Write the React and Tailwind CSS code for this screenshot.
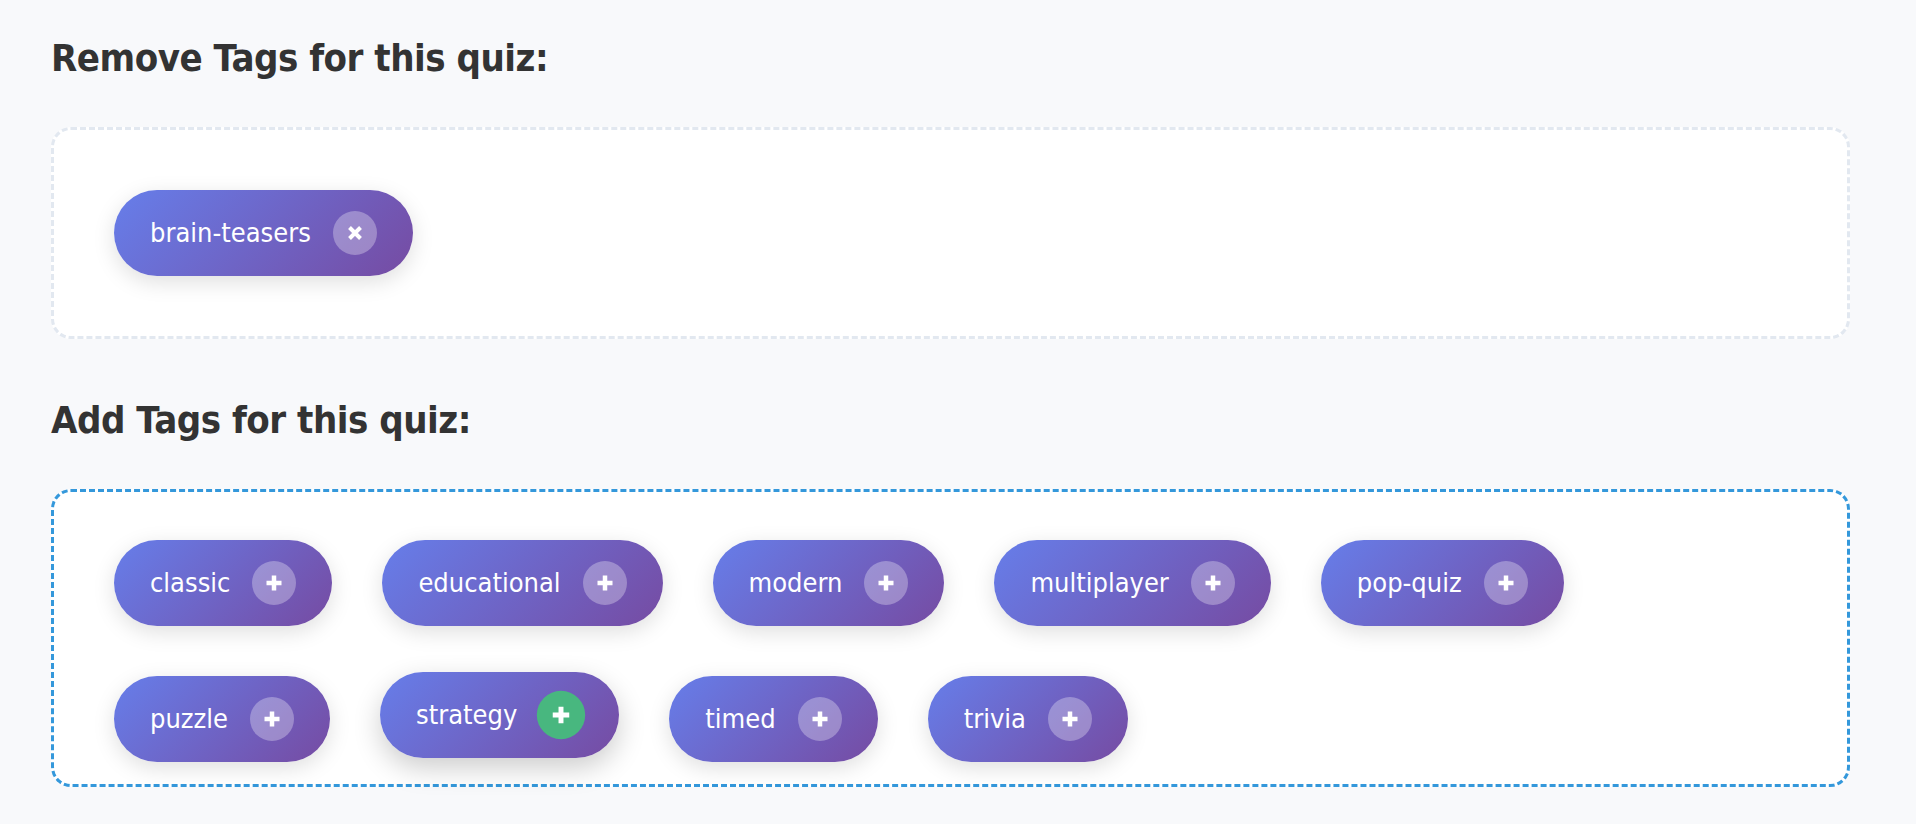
import React from "react";

function XIcon() {
  return (
    <svg width="18" height="18" viewBox="0 0 18 18" fill="none">
      <path d="M3.5 3.5 L14.5 14.5 M14.5 3.5 L3.5 14.5" stroke="white" strokeWidth="4" strokeLinecap="butt" />
    </svg>
  );
}

function PlusIcon() {
  return (
    <svg width="18" height="18" viewBox="0 0 18 18" fill="none">
      <path d="M9 1.5 V16.5 M1.5 9 H16.5" stroke="white" strokeWidth="4.5" />
    </svg>
  );
}

function Chip({ label, remove, hover }) {
  return (
    <div
      className={
        hover
          ? "flex items-center gap-[22px] h-[86px] px-[36px] rounded-full bg-[linear-gradient(135deg,#667eea_0%,#764ba2_100%)] text-white text-[27px] -translate-y-[4px] shadow-[0_10px_28px_rgba(0,0,0,0.2)]"
          : "flex items-center gap-[22px] h-[86px] px-[36px] rounded-full bg-[linear-gradient(135deg,#667eea_0%,#764ba2_100%)] text-white text-[27px] shadow-[0_6px_22px_rgba(0,0,0,0.13)]"
      }
    >
      <span className="whitespace-nowrap">{label}</span>
      <span
        className={
          hover
            ? "flex items-center justify-center w-[44px] h-[44px] rounded-full bg-[#48b77f] scale-110"
            : "flex items-center justify-center w-[44px] h-[44px] rounded-full bg-white/30"
        }
      >
        {remove ? <XIcon /> : <PlusIcon />}
      </span>
    </div>
  );
}

export default function App() {
  const addTags = [
    "classic",
    "educational",
    "modern",
    "multiplayer",
    "pop-quiz",
    "puzzle",
    "strategy",
    "timed",
    "trivia",
  ];
  return (
    <div className="min-h-screen bg-[#f8f9fb] pl-[51px] pr-[66px] pt-[35px] pb-[37px] font-['DejaVu_Sans_Condensed','DejaVu_Sans',sans-serif] font-stretch-condensed">
      <h2 className="text-[38px] leading-[46px] font-bold text-[#333333] tracking-[-0.5px] mb-[46px]">
        Remove Tags for this quiz:
      </h2>
      <div className="bg-white border-[3px] border-dashed border-[#e2e8f0] rounded-[20px] p-[60px] flex flex-wrap gap-[50px]">
        <Chip label="brain-teasers" remove />
      </div>
      <h2 className="text-[38px] leading-[46px] font-bold text-[#333333] tracking-[-0.5px] mt-[58px] mb-[46px]">
        Add Tags for this quiz:
      </h2>
      <div className="bg-white border-[3px] border-dashed border-[#3498db] rounded-[20px] pt-[48px] pb-[22px] px-[60px] flex flex-wrap gap-[50px]">
        {addTags.map((t) => (
          <Chip key={t} label={t} hover={t === "strategy"} />
        ))}
      </div>
    </div>
  );
}
